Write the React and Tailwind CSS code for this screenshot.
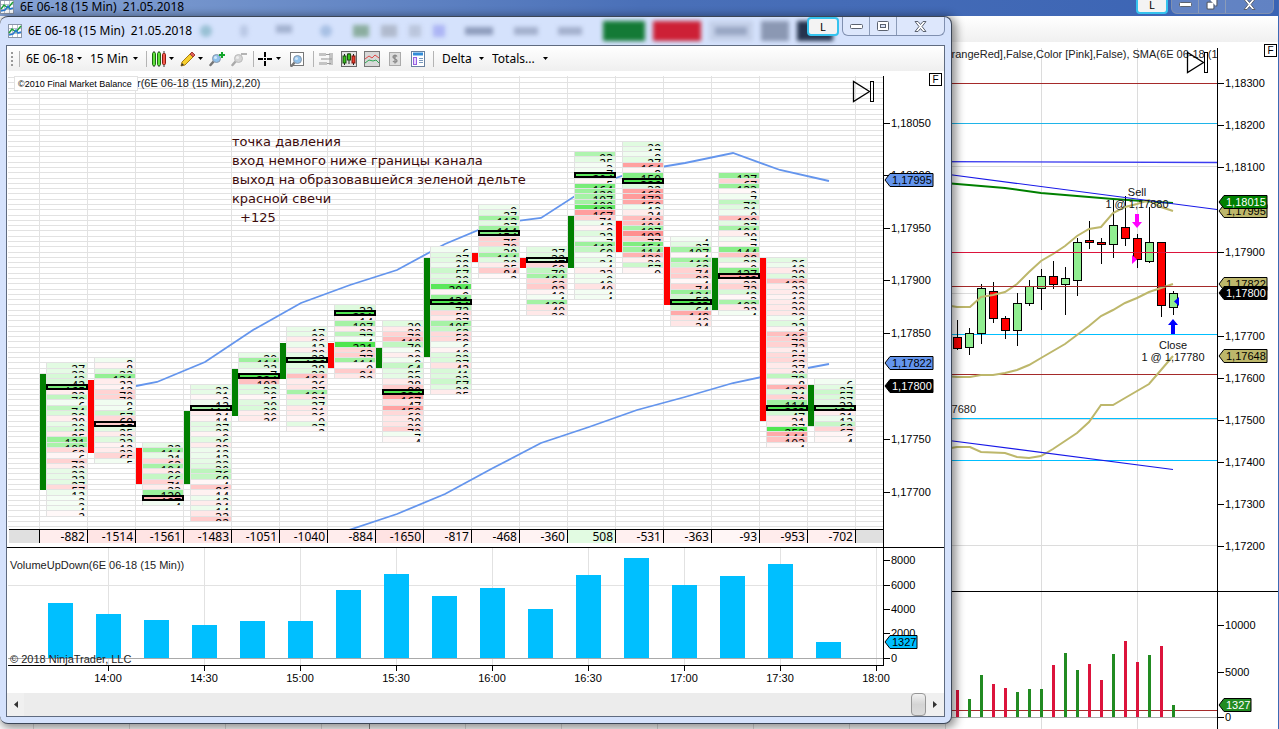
import React from "react"
import { Copy } from "lucide-react"

const STEP = 5.283
const rowY = (k) => Math.floor(77.7 + STEP * k)

// row = first price row, top/bottom = candle body, poc = index of the row with most volume
const footprint = [
  { row: 54, top: 374, bottom: 490, up: true, poc: 4, cells: [27, 23, 43, 42, 165, -22, 70, 6, 74, 38, -20, 20, 42, -25, 121, 103, -60, -6, -72, -22, 22, 22, 27, -57, 12, 2, 2, 4, -2] },
  { row: 53, top: 380, bottom: 453, up: false, poc: 12, cells: [8, -8, 32, 131, -23, -12, -70, -70, 8, 6, 57, -60, -85, 25, -23, 32, -12, -23, -65, 5] },
  { row: 69, top: 448, bottom: 484, up: false, poc: 10, cells: [22, 114, 21, -62, 104, -29, 66, -71, -23, 120, -127, 4] },
  { row: 58, top: 411, bottom: 484, up: true, poc: 4, cells: [23, 21, -3, 12, 114, -24, -11, 27, 22, -9, 26, -23, 12, 13, 22, 30, 76, 68, -4, -86, -14, 12, -24, 14, -32, -82] },
  { row: 52, top: 369, bottom: 416, up: true, poc: 4, cells: [20, 114, 32, 7, 324, -102, 32, 30, -5, 30, 39, -20, -26] },
  { row: 47, top: 343, bottom: 379, up: true, poc: 6, cells: [17, 20, -26, 13, -20, 23, 106, 28, 32, -104, -26, -37, 104, -37, 27, -31, -26, -9, 27, -2] },
  { row: 43, top: 343, bottom: 368, up: false, poc: 1, cells: [32, 231, -14, 107, -23, 77, 4, 221, -63, -77, 114, -9, -84, -32] },
  { row: 46, top: 348, bottom: 368, up: true, poc: 13, cells: [29, -28, -72, -110, 70, 3, -20, 8, 64, 25, 23, -28, -80, 224, -167, -47, -159, -60, -30, -38, -72, 7, -4] },
  { row: 32, top: 258, bottom: 357, up: true, poc: 10, cells: [6, 27, 28, 12, 57, 29, 43, 204, -9, 131, 264, 72, -59, -27, 105, 62, -59, -58, 6, -10, 32, 37, -42, 41, 33, 57, 29, -25] },
  { row: 24, top: 253, bottom: 262, up: false, poc: 5, cells: [9, 27, 112, 27, 114, 154, -75, -70, 39, 114, 30, -25, -84, -2] },
  { row: 32, top: 258, bottom: 268, up: false, poc: 2, cells: [27, 32, 47, -60, 70, 104, -63, -82, -10, 4, 108, -40, -30] },
  { row: 14, top: 216, bottom: 268, up: true, poc: 4, cells: [93, 25, 3, 7, 204, -5, 164, 120, 107, 109, 192, -167, -71, 12, -8, 32, 7, 118, 69, 3, 24, 4, -23, 9, 10, -40, 4, 4] },
  { row: 12, top: 221, bottom: 252, up: false, poc: 7, cells: [29, 17, 8, 27, -164, -8, 150, 326, 32, -160, -173, -150, 12, -24, -110, -104, 107, -192, -77, 154, 114, -130, -20, 57, -9] },
  { row: 30, top: 247, bottom: 305, up: false, poc: 12, cells: [4, 27, 107, -4, 112, 62, -74, -82, -4, -74, 124, 52, 263, 64, -148, -40, -34] },
  { row: 18, top: 258, bottom: 310, up: true, poc: 19, cells: [127, -67, 123, -2, 7, 72, 31, 9, -109, 27, 104, -20, 7, -7, 144, -98, 32, -9, 137, -162, -32, -72, 42, -3, 102, -32, 4] },
  { row: 34, top: 258, bottom: 421, up: false, poc: 28, cells: [26, 12, -29, 32, -103, -23, -28, -12, -28, -30, -32, 6, 32, -9, -106, -78, -72, -24, -57, -62, -27, -29, 72, -8, -128, 34, -70, 114, 263, 47, -31, -27, 253, -144, -103, -4] },
  { row: 57, top: 385, bottom: 426, up: true, poc: 5, cells: [6, 27, 57, 37, 32, 124, -21, 12, 62, -67, -6, -4] },
]

const upperBand = "136,386 157,382 205,362 253,330 301,303 350,285 397,270 445,244 493,224 541,218 589,187 637,171 685,163 733,153 780,170 829,181"
const lowerBand = "349,530 397,514 445,494 493,468 541,443 589,427 637,410 685,397 733,383 781,373 829,364"

const deltas = [-882, -1514, -1561, -1483, -1051, -1040, -884, -1650, -817, -468, -360, 508, -531, -363, -93, -953, -702]
const volumes = [4510, 3610, 3130, 2700, 3040, 3040, 5570, 6880, 5090, 5750, 4030, 6800, 8190, 6000, 6720, 7700, 1327]
const times = ["14:00", "14:30", "15:00", "15:30", "16:00", "16:30", "17:00", "17:30", "18:00"]

// wick top, body top, body bottom, wick bottom, up, volume bar top
const candles = [
  [320, 337, 348, 350, 0, 690],
  [328, 333, 347, 355, 1, 699],
  [284, 288, 333, 344, 1, 675],
  [282, 291, 318, 323, 0, 684],
  [316, 318, 330, 339, 0, 688],
  [293, 303, 330, 346, 1, 692],
  [280, 286, 303, 306, 1, 689],
  [269, 276, 288, 310, 1, 689],
  [261, 276, 284, 289, 0, 665],
  [267, 278, 284, 315, 1, 653],
  [238, 242, 280, 296, 1, 670],
  [221, 240, 242, 249, 0, 664],
  [238, 242, 244, 264, 0, 680],
  [200, 225, 244, 258, 1, 654],
  [196, 227, 238, 246, 0, 641],
  [234, 238, 259, 268, 0, 662],
  [207, 242, 261, 263, 1, 655],
  [242, 242, 305, 317, 0, 646],
  [291, 293, 307, 315, 1, 705],
]

const khakiLines = [
  "945,305 957,307 970,307 981,297 993,295 1005,292 1017,284 1029,272 1041,261 1053,254 1065,246 1077,236 1089,229 1101,227 1113,213 1125,207 1137,204 1149,200 1161,207 1173,211",
  "945,376 957,377 970,377 981,375 993,375 1005,373 1017,370 1029,365 1041,358 1065,344 1089,326 1101,316 1113,310 1125,303 1137,298 1149,292 1161,288 1173,284",
  "945,449 957,447 970,447 981,452 1005,453 1017,457 1029,458 1041,456 1053,449 1077,433 1089,422 1101,405 1113,405 1125,398 1149,384 1161,370 1173,356",
]

const levels = [
  [83, "#a52a2a"],
  [123, "#1fb4e8"],
  [252, "#dc143c"],
  [286, "#a52a2a"],
  [334, "#00bfff"],
  [374, "#a52a2a"],
  [418, "#00bfff"],
  [460, "#00bfff"],
  [710, "#a52a2a"],
]

function cellColor(v) {
  const a = Math.min(1, 0.05 + Math.abs(v) / 230)
  const mix = (c) => Math.round(255 + (c - 255) * a)
  return v > 0 ? `rgb(${mix(80)},${mix(230)},${mix(80)})` : `rgb(255,${mix(130)},${mix(130)})`
}

function Tag({ x, y, width, fill, color, children }) {
  return (
    <g>
      <path
        d={`M${x} ${y} l5 -6.5 h${width} v13 h-${width} z`}
        fill={fill}
        stroke="#000"
      />
      <text x={x + 7} y={y + 4} fill={color}>{children}</text>
    </g>
  )
}

function Tick({ x, y, children }) {
  return (
    <g>
      <rect x={x} y={y} width="6" height="1" shapeRendering="crispEdges" />
      <text x={x + 7} y={y + 4}>{children}</text>
    </g>
  )
}

function Arrow() {
  return (
    <svg width="5" height="3" viewBox="0 0 5 3" className="shrink-0" aria-hidden="true">
      <path d="M0 0h5L2.5 3z" />
    </svg>
  )
}

function Skip({ x, y }) {
  return (
    <g fill="none" stroke="#000">
      <path d={`M${x} ${y}v20l16 -10z`} strokeWidth="1.3" />
      <rect x={x + 17} y={y} width="3" height="20" />
    </g>
  )
}

function ChartIcon() {
  return (
    <svg width="14" height="14" viewBox="0 0 14 14" className="shrink-0" aria-hidden="true">
      <rect x=".5" y=".5" width="13" height="13" fill="#fff" stroke="#8995a8" />
      <path d="M4.500 1v12M9.500 1v12M1 4.500h12M1 9.500h12" stroke="#b8c0cc" />
      <path d="M1 9l3-4 4 3 5-6" fill="none" stroke="#20a03a" strokeWidth="1.500" />
      <path d="M1 11l4-1 3-4 2 3 3-1" fill="none" stroke="#2878d0" strokeWidth="1.500" />
    </svg>
  )
}

function Lens({ gray }) {
  return (
    <g>
      <path d="M5 10L1.500 14" stroke={gray ? "#aaa" : "#777"} strokeWidth="2.500" strokeLinecap="round" />
      <circle cx="7.500" cy="7.500" r="4" fill={gray ? "#d4d4d4" : "#8fc1ec"} stroke={gray ? "#bbb" : "#8a98aa"} />
      <circle cx="6.500" cy="6.500" r="1.500" fill="#fff" opacity=".6" />
    </g>
  )
}

function ToolIcon({ children }) {
  return (
    <svg width="16" height="16" viewBox="0 0 16 16" aria-hidden="true">
      {children}
    </svg>
  )
}

function ToolButton({ label, menu, children }) {
  return (
    <button aria-label={label} className="flex shrink-0 items-center gap-0.5">
      <ToolIcon>{children}</ToolIcon>
      {menu && <Arrow />}
    </button>
  )
}

function ToolSelect({ label, value, className }) {
  return (
    <label className="flex shrink-0 items-center gap-1">
      <select aria-label={label} className={`appearance-none bg-transparent ${className}`}>
        <option>{value}</option>
      </select>
      <Arrow />
    </label>
  )
}

function Separator() {
  return <div className="h-4 w-px shrink-0 bg-[#b4b4b4]" />
}

function Toolbar() {
  return (
    <div className="flex h-[25px] items-center bg-gradient-to-b from-white to-[#efefef] pl-1 font-['Noto_Sans',sans-serif] text-[12px] text-black">
      <svg width="2" height="14" viewBox="0 0 2 14" className="mr-1.5" aria-hidden="true">
        <path d="M1 0v14" stroke="#999" strokeWidth="2" strokeDasharray="2 2" />
      </svg>
      <div className="flex items-center gap-1.5">
        <Separator />
        <ToolSelect label="Instrument" value="6E 06-18" className="w-[47px]" />
      </div>
      <div className="ml-2 flex items-center gap-2">
        <ToolSelect label="Interval" value="15 Min" className="w-[39px]" />
        <Separator />
      </div>
      <div className="ml-1 flex items-center gap-1.5">
        <ToolButton label="Chart style" menu>
          <path d="M3 0v16M8 0v16M13 0v16" stroke="#333" />
          <rect x="1.500" y="1.500" width="3" height="13" rx="1" fill="#5fe03c" stroke="#1d6b12" />
          <rect x="6.500" y="1.500" width="3" height="13" rx="1" fill="#5fe03c" stroke="#1d6b12" />
          <rect x="11.500" y="2.500" width="3" height="11" rx="1" fill="#f25a4c" stroke="#8c1a12" />
        </ToolButton>
        <ToolButton label="Drawing tools" menu>
          <path d="M1 15l1-4 9-9 3 3-9 9z" fill="#f7cf2e" stroke="#a87c10" />
          <path d="M10 3l2-2 3 3-2 2z" fill="#e0605a" stroke="#a04038" />
          <path d="M1 15l1-3 2 2z" fill="#333" />
        </ToolButton>
        <ToolButton label="Zoom in">
          <Lens />
          <path d="M13 1v6M10 4h6" stroke="#12a52a" strokeWidth="2" />
        </ToolButton>
        <ToolButton label="Zoom out">
          <Lens gray />
          <path d="M10 3h6" stroke="#b4b4b4" strokeWidth="2" />
        </ToolButton>
        <Separator />
      </div>
      <div className="ml-1 flex items-center gap-2">
        <ToolButton label="Crosshair" menu>
          <path d="M7 1v5M7 10v5M0 8h5M9 8h5M6 8h2" stroke="#000" strokeWidth="2" />
        </ToolButton>
        <ToolButton label="Data box">
          <rect x="1.500" y="1.500" width="13" height="13" fill="#fff" stroke="#777" />
          <g transform="translate(1 1)"><Lens /></g>
        </ToolButton>
        <Separator />
      </div>
      <div className="ml-1 flex items-center gap-[7px]">
        <ToolButton label="Chart trader">
          <path d="M1 2h7v3H1zM3 7h6v2H3zM1 11h8v3H1zM11 2h4v12h-4z" fill="#c4c4c4" />
          <path d="M8 3.500h4M9 8h5M9 12.500h4" stroke="#999" />
        </ToolButton>
        <ToolButton label="Data series">
          <rect x=".5" y=".5" width="15" height="15" fill="#e4e4e4" stroke="#666" />
          <path d="M3.500 3v11M8 2v11M12.500 3v11" stroke="#222" />
          <rect x="2" y="5" width="3" height="7" fill="#38c21c" stroke="#174f0c" />
          <rect x="6.500" y="3" width="3" height="6" fill="#38c21c" stroke="#174f0c" />
          <rect x="11" y="5" width="3" height="7" fill="#ee3d2e" stroke="#7d150d" />
        </ToolButton>
        <ToolButton label="Indicators">
          <rect x=".5" y=".5" width="15" height="15" fill="#d8d8d8" stroke="#777" />
          <path d="M1 8l4-3 3 2 3-3 4 3" fill="none" stroke="#e04848" />
          <path d="M1 12l4-3 4 1 3-1 3 3" fill="none" stroke="#2fa855" />
        </ToolButton>
        <ToolButton label="Strategies">
          <rect x="2.500" y="1.500" width="11" height="13" fill="#ddd" stroke="#aaa" />
          <path d="M10 5.500C9 4 6 4.200 6 6c0 2 4 1.500 4 3.700C10 11.500 7 11.700 6 10M8 3.500v9" fill="none" stroke="#888" strokeWidth="1.300" />
        </ToolButton>
        <ToolButton label="Properties">
          <rect x="1.500" y=".5" width="13" height="15" fill="#fff" stroke="#68809e" />
          <path d="M3 3h10" stroke="#318bd8" strokeWidth="3" />
          <rect x="3.500" y="6.500" width="3" height="7" fill="#e5d5ff" stroke="#9560e0" />
          <path d="M9 7.500h4M9 9.500h4M9 11.500h4" stroke="#7898bd" />
        </ToolButton>
        <Separator />
      </div>
      <div className="ml-2 flex items-center gap-2">
        <ToolSelect label="Mode" value="Delta" className="w-[33px]" />
        <ToolSelect label="Totals" value="Totals..." className="w-[47px]" />
      </div>
    </div>
  )
}

function WindowControls({ restore }) {
  return (
    <div className="flex h-[19px] items-stretch">
      <button className="mr-[3px] w-8 rounded-sm border-2 border-[#35c3ee] bg-[#f3f3f3] font-['Noto_Sans',sans-serif] text-[11px] leading-[15px] text-black">L</button>
      <div className="flex divide-x divide-[#8b9bb8] rounded-b-md border border-t-0 border-[#8090b0] bg-white/20 text-[#5b6270]">
        <button aria-label="Minimize" className="flex w-[27px] items-center justify-center">
          <svg width="13" height="6" viewBox="0 0 13 6"><rect x=".5" y="1.500" width="12" height="4" rx="1" fill="#fff" stroke="currentColor" /></svg>
        </button>
        <button aria-label={restore ? "Restore" : "Maximize"} className="flex w-[27px] items-center justify-center">
          {restore ? (
            <Copy className="h-3 w-3 -scale-x-100 fill-white" strokeWidth={2.5} />
          ) : (
            <svg width="12" height="10" viewBox="0 0 12 10">
              <rect x=".5" y=".5" width="11" height="9" rx="1" fill="#fff" stroke="currentColor" />
              <rect x="3.500" y="3.500" width="5" height="3" fill="#dbe5fb" stroke="currentColor" />
            </svg>
          )}
        </button>
        <button aria-label="Close" className="flex w-[47px] items-center justify-center">
          <svg width="13" height="11" viewBox="0 0 13 11">
            <path d="M1 .5h3l2.500 3 2.500-3h3l-4 5 4 5H9l-2.500-3-2.500 3H1l4-5z" fill="#fff" stroke="currentColor" />
          </svg>
        </button>
      </div>
    </div>
  )
}

function FootprintColumn({ index, data }) {
  const x = 40 + index * 48
  const pocY = rowY(data.row + data.poc)
  return (
    <g>
      {data.cells.map((v, i) => {
        const y = rowY(data.row + i)
        const h = rowY(data.row + i + 1) - y
        return (
          <svg key={i} x={x + 6} y={y} width="42" height={h}>
            <rect width="42" height={h} fill="#e2e2e2" />
            <rect x="1" y="1" width="40" height={h - 1} fill={cellColor(v)} />
            <text x="39" y="12" textAnchor="end" fontSize="12" fontFamily="Noto Sans, sans-serif">{Math.abs(v)}</text>
          </svg>
        )
      })}
      <rect x={x} y={data.top} width="6" height={data.bottom - data.top} fill={data.up ? "#008000" : "#ff0000"} />
      <rect x={x + 7} y={pocY + 1} width="40" height="4" fill="none" stroke="#000" strokeWidth="2" />
    </g>
  )
}

function FootprintChart() {
  return (
    <svg width="876" height="458" viewBox="7 71 876 458" className="block font-['Liberation_Sans',sans-serif] text-[11px]">
      <g shapeRendering="crispEdges">
        {Array.from({ length: 86 }, (_, k) => (
          <rect key={k} x="8" y={rowY(k)} width="875" height="1" fill="#e2e2e2" />
        ))}
        {Array.from({ length: 18 }, (_, i) => (
          <rect key={i} x={39 + i * 48} y="76" width="1" height="453" fill="#e2e2e2" />
        ))}
      </g>
      <g fill="none" stroke="#6495ed" strokeWidth="1.800">
        <polyline points={upperBand} />
        <polyline points={lowerBand} />
      </g>
      <g shapeRendering="crispEdges">
        {footprint.map((col, i) => <FootprintColumn key={i} index={i} data={col} />)}
      </g>
      <text x="137" y="87" fill="#222">r(6E 06-18 (15 Min),2,20)</text>
      <rect x="14.500" y="76.500" width="123" height="14" fill="#fff" stroke="#e2e2e2" />
      <text x="18" y="87" fontSize="9">©2010 Final Market Balance</text>
      <g fill="#3c0a0a" fontFamily="DejaVu Sans, sans-serif" fontSize="13">
        <text x="232" y="146">точка давления</text>
        <text x="232" y="165">вход немного ниже границы канала</text>
        <text x="232" y="184">выход на образовавшейся зеленой дельте</text>
        <text x="232" y="203">красной свечи</text>
        <text x="240" y="222">+125</text>
      </g>
      <Skip x={853.5} y={81.500} />
    </svg>
  )
}

function DeltaTable() {
  return (
    <div className="h-[18px] pl-0.5">
      <table aria-label="Delta per bar" className="w-[874px] table-fixed border-separate border-spacing-0 border-t border-black font-['Noto_Sans',sans-serif] text-[12px] leading-[13px]">
        <colgroup>
          <col className="w-[31px]" />
          {deltas.map((_, i) => <col key={i} className="w-[48px]" />)}
          <col className="w-[27px]" />
        </colgroup>
        <tbody>
          <tr>
            <td className="border-r border-black bg-[#e0e0e0] p-0" />
            {deltas.map((d, i) => (
              <td
                key={i}
                className="border-r border-black p-0 pr-0.5 text-right"
                style={{ backgroundColor: d > 0 ? "#e2fbe2" : `rgba(255,60,60,${0.04 + Math.abs(d) / 16000})` }}
              >
                {d}
              </td>
            ))}
            <td className="bg-[#e0e0e0] p-0" />
          </tr>
        </tbody>
      </table>
    </div>
  )
}

function VolumeChart() {
  return (
    <svg width="876" height="146" viewBox="7 547 876 146" className="block overflow-visible font-['Liberation_Sans',sans-serif] text-[11px]">
      <g shapeRendering="crispEdges">
        {times.map((t, i) => <rect key={t} x={108 + i * 96} y="548" width="1" height="117" fill="#e2e2e2" />)}
        <rect x="8" y="585" width="875" height="1" fill="#e2e2e2" />
        <rect x="7" y="547" width="876" height="1" />
        {volumes.map((v, i) => {
          const h = Math.round(v * 0.0122)
          return <rect key={i} x={48 + i * 48} y={658 - h} width="25" height={h} fill="#00bfff" />
        })}
        <rect x="8" y="658" width="875" height="1" fill="#a9a9a9" />
        <rect x="8" y="665" width="876" height="1" />
        {times.map((t, i) => <rect key={t} x={108 + i * 96} y="666" width="1" height="5" />)}
      </g>
      <text x="10" y="569" fill="#222">VolumeUpDown(6E 06-18 (15 Min))</text>
      <text x="10" y="663" fill="#222">© 2018 NinjaTrader, LLC</text>
      {times.map((t, i) => <text key={t} x={108 + i * 96} y="682" textAnchor="middle">{t}</text>)}
    </svg>
  )
}

function FrontAxis() {
  return (
    <svg width="61" height="622" viewBox="883 71 61 622" className="block font-['Liberation_Sans',sans-serif] text-[11px]">
      <g shapeRendering="crispEdges">
        <rect x="883" y="76" width="1" height="590" />
        <rect x="883" y="547" width="61" height="1" />
      </g>
      <Tick x={884} y={123}>1,18050</Tick>
      <Tick x={884} y={175}>1,18000</Tick>
      <Tick x={884} y={228}>1,17950</Tick>
      <Tick x={884} y={280}>1,17900</Tick>
      <Tick x={884} y={333}>1,17850</Tick>
      <Tick x={884} y={439}>1,17750</Tick>
      <Tick x={884} y={492}>1,17700</Tick>
      <Tick x={884} y={560}>8000</Tick>
      <Tick x={884} y={585}>6000</Tick>
      <Tick x={884} y={609}>4000</Tick>
      <Tick x={884} y={633}>2000</Tick>
      <Tick x={884} y={658}>0</Tick>
      <Tag x={885} y={180} width={43} fill="#6495ed" color="#000">1,17995</Tag>
      <Tag x={885} y={363} width={43} fill="#6495ed" color="#000">1,17822</Tag>
      <Tag x={885} y={386} width={43} fill="#000" color="#fff">1,17800</Tag>
      <Tag x={885} y={642} width={27} fill="#00bfff" color="#000">1327</Tag>
    </svg>
  )
}

function BackPlot() {
  return (
    <svg width="1217" height="687" viewBox="0 42 1217 687" className="block shrink-0 font-['Liberation_Sans',sans-serif] text-[11px]">
      <g shapeRendering="crispEdges">
        {[33, 129, 225, 321, 465, 561, 657, 753, 849, 945, 1041, 1137].map((x) => (
          <rect key={x} x={x} y="48" width="1" height="681" fill="#dcdcdc" />
        ))}
        <rect x="369" y="718" width="1" height="11" fill="#888" />
        {[166, 293, 419, 545].map((y) => <rect key={y} x="0" y={y} width="1217" height="1" fill="#dcdcdc" />)}
        {levels.map(([y, color]) => <rect key={y} x="0" y={y} width="1217" height="1" fill={color} />)}
        <rect x="0" y="717" width="1217" height="1" fill="#a9a9a9" />
      </g>
      <path d="M900 161.500L1217 162.500" stroke="#3c3cf0" strokeWidth="1.300" />
      <polyline points="945,183 1005,188 1041,193 1053,194 1113,199 1173,203" fill="none" stroke="#008000" strokeWidth="2" />
      {candles.map(([wt, bt, bb, wb, up, vol], i) => {
        const x = 957 + i * 12
        return (
          <g key={x} shapeRendering="crispEdges">
            <rect x={x} y={wt} width="1" height={wb - wt} />
            <rect x={x - 4} y={bt} width="9" height={bb - bt + 1} />
            {bb - bt > 1 && <rect x={x - 3} y={bt + 1} width="7" height={bb - bt - 1} fill={up ? "#90ee90" : "#ff0000"} />}
            <rect x={x - 1} y={vol} width="3" height={717 - vol} fill={up ? "#228b22" : "#dc143c"} />
          </g>
        )
      })}
      {khakiLines.map((points) => (
        <polyline key={points} points={points} fill="none" stroke="#bdb76b" strokeWidth="2" />
      ))}
      <path d="M945 174L1217 209.500M945 440L1173 469.500" stroke="#1818e8" strokeWidth="1.200" />
      <rect x="0" y="252" width="1217" height="1" fill="#dc143c" shapeRendering="crispEdges" />
      <rect x="0" y="286" width="1217" height="1" fill="#a52a2a" shapeRendering="crispEdges" />
      <rect x="0" y="591" width="1217" height="1" shapeRendering="crispEdges" />
      <path d="M1135 214h4v8h3l-5 6-5-6h3z" fill="#ff00ff" />
      <path d="M1132 255v9l5-4.500z" fill="#ff00ff" />
      <path d="M1179 297v9l-5-4.500z" fill="#0000ff" />
      <path d="M1171 334h4v-9h3l-5-6-5 6h3z" fill="#0000ff" />
      <g fill="#111" textAnchor="middle">
        <text x="1137" y="196">Sell</text>
        <text x="1137" y="208">1 @ 1,17880</text>
        <text x="1173" y="349">Close</text>
        <text x="1173" y="361">1 @ 1,17780</text>
      </g>
      <text x="976" y="413" textAnchor="end" fill="#222">1,17680</text>
      <text x="943" y="58" fill="#222">OrangeRed],False,Color [Pink],False), SMA(6E 06-18 (15 Min)</text>
      <Skip x={1187.5} y={52.500} />
    </svg>
  )
}

function BackAxis() {
  const prices = [
    [83, "1,18300"], [125, "1,18200"], [167, "1,18100"], [252, "1,17900"], [336, "1,17700"], [378, "1,17600"],
    [420, "1,17500"], [462, "1,17400"], [504, "1,17300"], [546, "1,17200"], [625, "10000"], [672, "5000"], [717, "0"],
  ]
  return (
    <svg width="61" height="687" viewBox="1217 42 61 687" className="block font-['Liberation_Sans',sans-serif] text-[11px]">
      <g shapeRendering="crispEdges">
        <rect x="1217" y="48" width="1" height="681" />
        <rect x="1217" y="591" width="61" height="1" />
      </g>
      {prices.map(([y, label]) => <Tick key={label} x={1218} y={y}>{label}</Tick>)}
      <Tag x={1219} y={211} width={43} fill="#bdb76b" color="#000">1,17995</Tag>
      <Tag x={1219} y={202} width={43} fill="#008000" color="#fff">1,18015</Tag>
      <Tag x={1219} y={284} width={43} fill="#bdb76b" color="#000">1,17822</Tag>
      <Tag x={1219} y={293} width={43} fill="#000" color="#fff">1,17800</Tag>
      <Tag x={1219} y={356} width={43} fill="#bdb76b" color="#000">1,17648</Tag>
      <Tag x={1219} y={705} width={27} fill="#228b22" color="#fff">1327</Tag>
    </svg>
  )
}

function FixedButton({ className }) {
  return (
    <button aria-label="Fixed scale" className={`absolute flex h-[13px] w-[13px] items-center justify-center border border-black bg-white text-[10px] leading-none text-black ${className}`}>
      F
    </button>
  )
}

// toolbar of the window behind, seen through the glass title bar
function GlassReflection() {
  return (
    <div aria-hidden="true" className="absolute inset-0 flex items-center justify-between overflow-hidden pr-[118px] pl-[200px] text-[12px] text-[#5c6a85] blur-[2px]">
      <div className="flex gap-7 opacity-50">
        <div className="h-3 w-3 rounded-full bg-[#5e9fae]" />
        <div className="h-3 w-2 rounded-full bg-[#9fb0cf]" />
        <div className="h-2 w-4 bg-[#7584a5]" />
        <div className="h-3 w-3 rounded-full bg-[#7c9fce]" />
      </div>
      <div className="flex gap-3 opacity-60">
        <div className="h-3 w-4 bg-[#5b8a62]" />
        <div className="h-3 w-4 bg-[#98a0ae]" />
        <div className="h-3 w-3 bg-[#a9b3c6]" />
        <div className="h-3 w-3 bg-[#9298f0]" />
      </div>
      <div className="h-2 w-7 bg-[#8f9dbd]" />
      <div className="h-2 w-6 bg-[#a3b0cd]" />
      <div className="h-2 w-6 bg-[#a3b0cd]" />
      <div className="flex items-center gap-2">
        <div className="h-5 w-[42px] bg-[#147a36]" />
        <div className="h-5 w-[48px] bg-[#cd2036]" />
        <div className="flex h-5 w-[44px] items-center justify-center bg-[#c3cfe8]"><div className="h-2 w-8 bg-[#98a6c3]" /></div>
        <div className="h-5 w-[28px] bg-[#8b98b3]" />
        <div className="h-5 w-[36px] bg-[#26344f]" />
      </div>
    </div>
  )
}

function FrontWindow() {
  return (
    <section className="absolute top-4 right-[326px] left-0 overflow-hidden rounded-lg border border-l-0 border-[#3c4656] bg-[#d5e2fc] shadow-[2px_2px_10px_2px_rgba(0,0,0,0.45)]">
      <header className="relative flex h-7 items-start justify-between pr-1.5 pl-2">
        <GlassReflection />
        <div className="relative flex h-7 items-center gap-1.5 font-['Noto_Sans',sans-serif] text-[12px] text-black">
          <ChartIcon />
          <h1 className="whitespace-pre">6E 06-18 (15 Min)  21.05.2018</h1>
        </div>
        <div className="relative"><WindowControls /></div>
      </header>
      <div className="mr-1.5 mb-1.5 ml-1.5 border border-[#5f6b80] bg-white">
        <Toolbar />
        <div className="relative flex">
          <div className="min-w-0 flex-1">
            <FootprintChart />
            <DeltaTable />
            <VolumeChart />
          </div>
          <FrontAxis />
          <FixedButton className="top-[2px] right-[2px]" />
        </div>
        <div className="flex h-[23px] items-center bg-[#ececec]">
          <button aria-label="Scroll left" className="flex h-full w-[17px] items-center justify-center bg-[#f0f0f0]">
            <svg width="4" height="7" viewBox="0 0 4 7"><path d="M4 0v7L0 3.500z" fill="#333" /></svg>
          </button>
          <div className="flex h-full flex-1 justify-end">
            <div className="h-full w-[15px] rounded-sm border border-[#979797] bg-gradient-to-b from-[#f2f2f2] via-[#d4d4d4] to-[#dcdcdc]" />
          </div>
          <button aria-label="Scroll right" className="flex h-full w-[18px] items-center justify-center bg-[#f0f0f0]">
            <svg width="4" height="7" viewBox="0 0 4 7"><path d="M0 0v7l4-3.500z" fill="#333" /></svg>
          </button>
        </div>
      </div>
    </section>
  )
}

export default function App() {
  return (
    <main className="relative min-h-screen overflow-hidden border-r border-[#3c6ab5] bg-white font-['Liberation_Sans',sans-serif]">
      <header className="flex h-4 items-end justify-between overflow-hidden bg-gradient-to-r from-[#86a3d4] via-[#4a70b8] to-[#3a63b4] pr-1">
        <div className="flex items-center gap-1.5 pb-0.5 font-['Noto_Sans',sans-serif] text-[12px] leading-[14px] text-black">
          <ChartIcon />
          <span className="whitespace-pre">6E 06-18 (15 Min)  21.05.2018</span>
        </div>
        <div className="pb-0.5"><WindowControls restore /></div>
      </header>
      <div className="h-[26px] bg-gradient-to-b from-white to-[#f0f0f0]" />
      <div className="relative flex">
        <div className="flex min-w-0 flex-1 justify-end overflow-hidden">
          <BackPlot />
        </div>
        <BackAxis />
        <FixedButton className="top-[2px] right-[1px]" />
      </div>
      <FrontWindow />
    </main>
  )
}
